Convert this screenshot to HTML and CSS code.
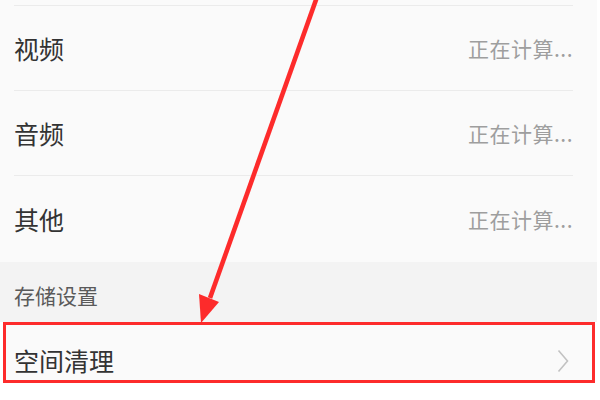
FILE: index.html
```html
<!DOCTYPE html>
<html lang="zh-CN">
<head>
<meta charset="utf-8">
<title>存储</title>
<link rel="stylesheet" href="styles.css">
</head>
<body>
<div class="screen">
  <ul class="list">
    <li class="row"><span class="label">视频</span><span class="value">正在计算...</span></li>
    <li class="row"><span class="label">音频</span><span class="value">正在计算...</span></li>
    <li class="row"><span class="label">其他</span><span class="value">正在计算...</span></li>
  </ul>
  <div class="section-header">存储设置</div>
  <div class="action-row">
    <span class="label">空间清理</span>
    <svg class="chevron" width="12" height="24" viewBox="0 0 12 24"><polyline points="1.5,1.5 10.5,12 1.5,22.5" fill="none" stroke="#c2c2c2" stroke-width="1.6"/></svg>
  </div>
  <svg class="arrow" width="600" height="400" viewBox="0 0 600 400">
    <line x1="317" y1="-3" x2="210" y2="298" stroke="#fd2b2b" stroke-width="4.6"/>
    <polygon points="201,323 199,294 219,302" fill="#fd2b2b"/>
  </svg>
</div>
</body>
</html>
```
FILE: styles.css
```css
html, body {
  margin: 0;
  padding: 0;
  background: #ffffff;
}
.screen {
  position: relative;
  width: 600px;
  height: 400px;
  overflow: hidden;
  font-family: "Noto Sans CJK SC", "Noto Sans", sans-serif;
}
.list {
  list-style: none;
  margin: 0;
  padding: 5px 0 0 0;
  width: 597px;
  background: #fafafa;
}
.row {
  display: flex;
  align-items: center;
  justify-content: space-between;
  margin: 0 24px 0 14px;
  height: 84px;
  border-top: 1px solid #ebebeb;
}
.row:last-child {
  height: 86px;
}
.label {
  font-size: 25px;
  color: #333333;
  line-height: 1;
}
.value {
  font-size: 21px;
  letter-spacing: 0.5px;
  color: #9e9e9e;
  line-height: 1;
}
.section-header {
  width: 597px;
  box-sizing: border-box;
  height: 60px;
  padding: 5px 0 0 14px;
  display: flex;
  align-items: center;
  background: #f3f3f3;
  font-size: 21px;
  color: #5a5a5a;
}
.action-row {
  width: 592px;
  margin-left: 3px;
  box-sizing: border-box;
  height: 61px;
  border: 3px solid #fd2b2b;
  padding: 16px 23px 0 8px;
  display: flex;
  align-items: center;
  justify-content: space-between;
  background: #fafafa;
}
.chevron {
  display: block;
}
.arrow {
  position: absolute;
  left: 0;
  top: 0;
  pointer-events: none;
}
```
